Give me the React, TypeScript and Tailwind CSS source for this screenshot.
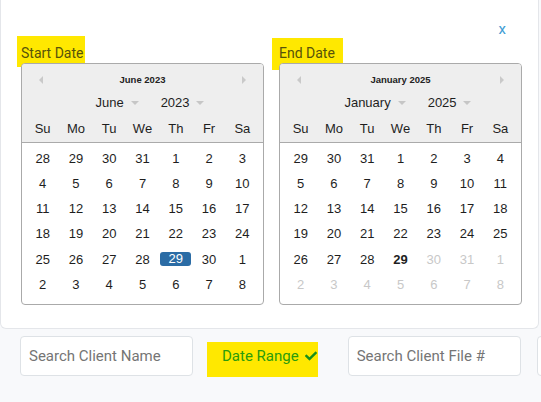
import React from 'react';

type Day = { d: number; muted?: boolean; selected?: boolean; today?: boolean };

const DAY_NAMES = ['Su', 'Mo', 'Tu', 'We', 'Th', 'Fr', 'Sa'];

const row = (nums: number[], extra: (n: number, i: number) => Partial<Day> = () => ({})): Day[] =>
  nums.map((d, i) => ({ d, ...extra(d, i) }));

const START_WEEKS: Day[][] = [
  row([28, 29, 30, 31, 1, 2, 3]),
  row([4, 5, 6, 7, 8, 9, 10]),
  row([11, 12, 13, 14, 15, 16, 17]),
  row([18, 19, 20, 21, 22, 23, 24]),
  row([25, 26, 27, 28, 29, 30, 1], (_, i) => (i === 4 ? { selected: true } : {})),
  row([2, 3, 4, 5, 6, 7, 8]),
];

const END_WEEKS: Day[][] = [
  row([29, 30, 31, 1, 2, 3, 4]),
  row([5, 6, 7, 8, 9, 10, 11]),
  row([12, 13, 14, 15, 16, 17, 18]),
  row([19, 20, 21, 22, 23, 24, 25]),
  row([26, 27, 28, 29, 30, 31, 1], (_, i) => (i === 3 ? { today: true } : i > 3 ? { muted: true } : {})),
  row([2, 3, 4, 5, 6, 7, 8], () => ({ muted: true })),
];

function NavArrow({ dir }: { dir: 'left' | 'right' }) {
  return (
    <svg width="4" height="8" viewBox="0 0 4 8" className="block">
      <path d={dir === 'left' ? 'M4 0L0 4L4 8Z' : 'M0 0L4 4L0 8Z'} fill="#c9c9c9" />
    </svg>
  );
}

function Caret() {
  return (
    <svg width="8" height="4" viewBox="0 0 8 4" className="block">
      <path d="M0 0H8L4 4Z" fill="#c6c6c6" />
    </svg>
  );
}

type CalendarProps = { title: string; month: string; year: string; weeks: Day[][] };

function Calendar({ title, month, year, weeks }: CalendarProps) {
  return (
    <div className="relative w-[243px] overflow-hidden rounded-[4px] border border-[#aaaaaa] bg-white font-['Liberation_Sans',Arial,sans-serif] text-[13px] text-[#1e1e1e]">
      <div className="h-[79px] border-b border-[#aaaaaa] bg-[#eeeeee]">
        <div className="flex h-8 items-center justify-between px-[17px]">
          <NavArrow dir="left" />
          <span className="text-[9.5px] font-bold text-[#222]">{title}</span>
          <NavArrow dir="right" />
        </div>
        <div className="flex h-[14px] items-center justify-center pl-[14px] leading-[14px]">
          <span>{month}</span>
          <span className="ml-[7px]">
            <Caret />
          </span>
          <span className="ml-[22px]">{year}</span>
          <span className="ml-[6px]">
            <Caret />
          </span>
        </div>
        <div className="mt-[9px] grid h-[20px] grid-cols-7 items-center px-[4px] text-center leading-[20px]">
          {DAY_NAMES.map((n) => (
            <span key={n}>{n}</span>
          ))}
        </div>
      </div>
      <div className="grid grid-cols-7 px-[4px] pt-[3px] pb-[7px]">
        {weeks.flat().map((day, i) => (
          <div key={i} className="flex h-[25.2px] items-center justify-center">
            {day.selected ? (
              <span className="h-[14px] w-[31px] rounded-[3px] bg-[#2b6ca5] text-center leading-[14px] text-white">
                {day.d}
              </span>
            ) : (
              <span className={`${day.muted ? 'text-[#c8c8c8]' : ''} ${day.today ? 'font-bold' : ''}`}>{day.d}</span>
            )}
          </div>
        ))}
      </div>
    </div>
  );
}

function Label({ text, hl }: { text: string; hl: string }) {
  return (
    <div className="h-[20px] leading-[20px]">
      <span className="relative inline-block">
        <span className={`absolute bg-[#ffe800] ${hl}`} />
        <span className="relative text-[14px] text-[#57530a]">{text}</span>
      </span>
    </div>
  );
}

function SearchInput({ placeholder, className = '' }: { placeholder: string; className?: string }) {
  return (
    <input
      type="text"
      placeholder={placeholder}
      className={`h-[40px] w-[173px] shrink-0 rounded-[4px] border border-[#dee2e6] bg-white px-2 text-[15px] outline-none placeholder:text-[#757575] ${className}`}
    />
  );
}

export default function App() {
  return (
    <div className="h-[402px] w-[541px] overflow-hidden bg-[#f8f9fb] font-['Roboto',sans-serif]">
      <div className="w-[539px] rounded-b-[6px] border border-t-0 border-[#e4e6ea] bg-white pb-[23px]">
        <div className="flex h-[43px] justify-end pt-[16px] pr-[32px]">
          <button type="button" className="text-[15px] leading-[15px] text-[#3d9bd3]">
            x
          </button>
        </div>
        <div className="flex gap-[15px] pl-[20px]">
          <div>
            <Label text="Start Date" hl="-left-[4px] -right-[2px] -top-[7px] -bottom-[4px]" />
            <Calendar title="June 2023" month="June" year="2023" weeks={START_WEEKS} />
          </div>
          <div>
            <Label text="End Date" hl="-left-[7px] -right-[8px] -top-[5px] -bottom-[7px]" />
            <Calendar title="January 2025" month="January" year="2025" weeks={END_WEEKS} />
          </div>
        </div>
      </div>

      <div className="mt-[7px] flex items-center pl-[20px]">
        <SearchInput placeholder="Search Client Name" />
        <div className="relative ml-[14px] flex h-[40px] shrink-0 items-center whitespace-nowrap pl-[15px] pr-[1px]">
          <span className="absolute inset-x-0 top-[6px] -bottom-[1px] bg-[#ffe800]" />
          <span className="relative text-[15px] text-[#2a9c0c]">Date Range</span>
          <svg width="12" height="12" viewBox="0 0 512 512" className="relative ml-[6px]">
            <path
              fill="#168f1c"
              d="M173.898 439.404l-166.4-166.4c-9.997-9.997-9.997-26.206 0-36.204l36.203-36.204c9.997-9.998 26.207-9.998 36.204 0L192 312.69 432.095 72.596c9.997-9.997 26.207-9.997 36.204 0l36.203 36.204c9.997 9.997 9.997 26.206 0 36.204l-294.4 294.401c-9.998 9.997-26.207 9.997-36.204-.001z"
            />
          </svg>
        </div>
        <SearchInput placeholder="Search Client File #" className="ml-[30px]" />
        <SearchInput placeholder="Search" className="ml-[16px]" />
      </div>
    </div>
  );
}
